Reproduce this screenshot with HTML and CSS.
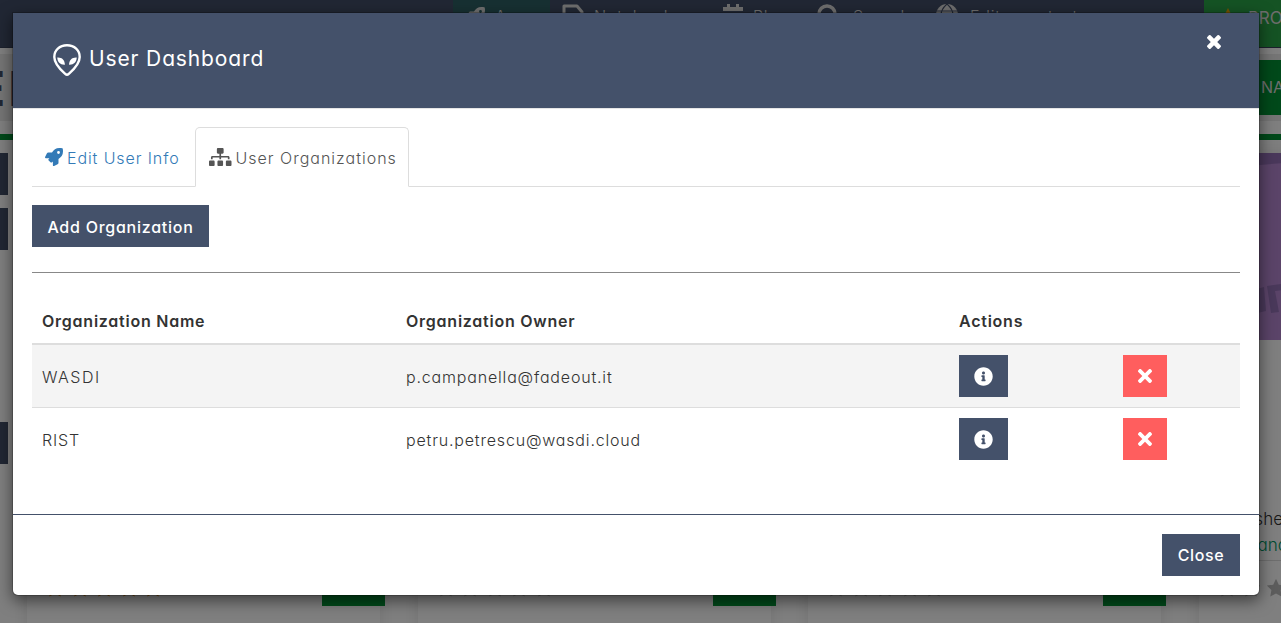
FILE: index.html
```html
<!DOCTYPE html>
<html lang="en">
<head>
<meta charset="utf-8">
<title>User Dashboard</title>
<link rel="stylesheet" href="styles.css">
</head>
<body>
<svg class="defs" aria-hidden="true">
  <symbol id="rocket" viewBox="0 0 512 512"><path d="M505.1 19.1c-1.2-5.5-6.700-11-12.200-12.200C460.700 0 435.500 0 410.400 0 307.200 0 245.300 55.200 199 128H94.800c-16.300 0-35.500 11.900-42.900 26.500L2.500 253.300A28.400 28.400 0 0 0 0 264a24 24 0 0 0 24 24h103.800l-22.500 22.500c-11.300 11.300-13 32.200 0 45.200l50.900 50.900c11.200 11.200 32.200 13.200 45.300 0l22.500-22.400V488a24 24 0 0 0 24 24 28.600 28.600 0 0 0 10.700-2.500l98.700-49.400c14.600-7.300 26.500-26.500 26.500-42.900V312.800C456.600 266.500 512 204.400 512 101.700c0-25.200 0-50.400-6.900-82.600zM384 168a40 40 0 1 1 40-40 40 40 0 0 1-40 40z"/></symbol>
  <symbol id="info" viewBox="0 0 512 512"><path d="M256 8C119.043 8 8 119.083 8 256c0 136.997 111.043 248 248 248s248-111.003 248-248C504 119.083 392.957 8 256 8zm0 110c23.196 0 42 18.804 42 42s-18.804 42-42 42-42-18.804-42-42 18.804-42 42-42zm56 254c0 6.627-5.373 12-12 12h-88c-6.627 0-12-5.373-12-12v-24c0-6.627 5.373-12 12-12h12v-64h-12c-6.627 0-12-5.373-12-12v-24c0-6.627 5.373-12 12-12h64c6.627 0 12 5.373 12 12v100h12c6.627 0 12 5.373 12 12v24z"/></symbol>
  <symbol id="times" viewBox="0 80 352 352"><path d="M242.72 256l100.07-100.07c12.28-12.28 12.28-32.19 0-44.48l-22.24-22.24c-12.28-12.28-32.19-12.28-44.48 0L176 189.280 75.930 89.210c-12.280-12.280-32.190-12.280-44.480 0L9.210 111.450c-12.280 12.280-12.280 32.190 0 44.480L109.280 256 9.210 356.070c-12.280 12.280-12.280 32.190 0 44.480l22.240 22.240c12.280 12.280 32.200 12.280 44.480 0L176 322.720l100.070 100.070c12.280 12.280 32.200 12.280 44.480 0l22.240-22.240c12.280-12.280 12.280-32.190 0-44.480L242.720 256z"/></symbol>
  <symbol id="star" viewBox="1 1 18 18"><path d="M10 .8l2.800 5.900 6.400.9-4.600 4.500 1.100 6.500L10 15.500l-5.700 3.100 1.100-6.500L.8 7.600l6.400-.9z"/></symbol>
</svg>

<div class="app">
  <nav class="navbar">
    <div class="nav-item active"><svg width="18" height="18"><use href="#rocket"/></svg><span>Apps</span></div>
    <div class="nav-item notebooks"><svg width="22" height="24" viewBox="0 0 22 24"><path d="M2 2h13l5 6v14H2z" fill="none" stroke="currentColor" stroke-width="3" stroke-linejoin="round"/></svg><span>Notebooks</span></div>
    <div class="nav-item plan"><svg width="20" height="24" viewBox="0 0 20 24"><path d="M4 0h3v3h6V0h3v3h4v4H0V3h4zM0 9h20v14H0z"/></svg><span>Plan</span></div>
    <div class="nav-item search"><svg width="22" height="22" viewBox="0 0 22 22"><path d="M10 2a8 8 0 1 1 0 16 8 8 0 0 1 0-16zm5 14l6 5" fill="none" stroke="currentColor" stroke-width="3.500"/></svg><span>Search</span></div>
    <div class="nav-item edit"><svg width="22" height="22" viewBox="0 0 22 22"><circle cx="11" cy="11" r="11"/><path d="M0 7h22M0 15h22M11 0C3 7 3 15 11 22 19 15 19 7 11 0" fill="none" stroke="#434f68" stroke-width="1.200"/></svg><span>Edit your text</span></div>
    <div class="pro"><svg width="12" height="14" viewBox="0 0 12 14"><path d="M6 0l2 4 4 9H0l4-9z"/></svg><span>PRO</span></div>
  </nav>
  <header class="titlebar"><div class="app-title">ED</div><div class="new-app">NAME</div></header>
  <div class="content">
    <aside class="filters"><i></i><i></i><i class="last"></i></aside>
    <section class="card"><div class="card-foot rated"><div class="stars"><svg><use href="#star"/></svg><svg><use href="#star"/></svg><svg><use href="#star"/></svg><svg><use href="#star"/></svg><svg><use href="#star"/></svg></div><div class="open"></div></div></section>
    <section class="card"><div class="card-foot"><div class="stars"><svg><use href="#star"/></svg><svg><use href="#star"/></svg><svg><use href="#star"/></svg><svg><use href="#star"/></svg><svg><use href="#star"/></svg></div><div class="open"></div></div></section>
    <section class="card"><div class="card-foot"><div class="stars"><svg><use href="#star"/></svg><svg><use href="#star"/></svg><svg><use href="#star"/></svg><svg><use href="#star"/></svg><svg><use href="#star"/></svg></div><div class="open"></div></div></section>
    <section class="card">
      <svg class="cover" viewBox="0 0 353 187"><path d="M0 0h353v187H0z" fill="#b688d2"/><path d="M0 0h353L84 10 0 17z" fill="#9470b6"/><path d="M54 137l11-3 2 24-13 3zM68 133l22-3v6l-14 2 4 21-8 1z" fill="#9572b7"/></svg>
      <div class="card-copy"><p>Publisher</p><p class="author">and</p></div>
      <div class="card-foot"><div class="stars"><svg><use href="#star"/></svg><svg><use href="#star"/></svg><svg><use href="#star"/></svg></div></div>
    </section>
  </div>
</div>

<div class="overlay">
  <div class="modal" role="dialog">
    <header class="modal-header">
      <svg class="alien" width="28" height="32" viewBox="0 0 28 32"><path d="M14 1.300C6.500 1.300 1.300 6.300 1.300 13c0 7.500 7.700 14 10.900 16.900 1.100 1 2.500 1 3.600 0C19 27 26.700 20.500 26.700 13 26.700 6.300 21.500 1.300 14 1.300z" fill="none" stroke="currentColor" stroke-width="2.400"/><path d="M4.300 13.500c4.700-.3 7.500 2.500 7.600 7.200-4.500.3-7.600-2.600-7.600-7.200zM23.700 13.500c-4.700-.3-7.500 2.500-7.600 7.200 4.500.3 7.600-2.600 7.600-7.200z"/></svg>
      <h1>User Dashboard</h1>
      <button class="dismiss" aria-label="Close"><svg width="14" height="14" viewBox="110 366 1188 1188"><path d="M1298 1322q0 40-28 68l-136 136q-28 28-68 28t-68-28l-294-294-294 294q-28 28-68 28t-68-28l-136-136q-28-28-28-68t28-68l294-294-294-294q-28-28-28-68t28-68l136-136q28-28 68-28t68 28l294 294 294-294q28-28 68-28t68 28l136 136q28 28 28 68t-28 68l-294 294 294 294q28 28 28 68z"/></svg></button>
    </header>
    <div class="modal-body">
      <div class="tabs">
        <a class="tab"><svg width="18" height="18"><use href="#rocket"/></svg><span class="t-info">Edit User Info</span></a>
        <a class="tab current"><svg width="22.500" height="18" viewBox="0 0 640 512"><path d="M128 352H32c-17.670 0-32 14.330-32 32v96c0 17.670 14.330 32 32 32h96c17.670 0 32-14.330 32-32v-96c0-17.670-14.330-32-32-32zm-24-80h192v48h48v-48h192v48h48v-57.590c0-21.170-17.230-38.410-38.410-38.410H344v-64h40c17.670 0 32-14.330 32-32V32c0-17.670-14.330-32-32-32H256c-17.670 0-32 14.330-32 32v96c0 17.670 14.330 32 32 32h40v64H94.410C73.230 224 56 241.230 56 262.410V320h48v-48zm264 80h-96c-17.670 0-32 14.330-32 32v96c0 17.670 14.330 32 32 32h96c17.670 0 32-14.330 32-32v-96c0-17.670-14.330-32-32-32zm240 0h-96c-17.670 0-32 14.330-32 32v96c0 17.670 14.330 32 32 32h96c17.670 0 32-14.330 32-32v-96c0-17.670-14.330-32-32-32z"/></svg><span class="t-org">User Organizations</span></a>
      </div>
      <button class="btn add"><span>Add Organization</span></button>
      <hr>
      <table>
        <colgroup><col class="c-name"><col class="c-owner"><col class="c-info"><col></colgroup>
        <thead><tr><th>Organization Name</th><th>Organization Owner</th><th>Actions</th><th></th></tr></thead>
        <tbody>
          <tr><td><span class="acronym">WASDI</span></td><td><span>p.campanella@fadeout.it</span></td><td><button class="btn icon"><svg width="19" height="19"><use href="#info"/></svg></button></td><td><button class="btn icon danger"><svg width="14" height="14"><use href="#times"/></svg></button></td></tr>
          <tr><td><span>RIST</span></td><td><span>petru.petrescu@wasdi.cloud</span></td><td><button class="btn icon"><svg width="19" height="19"><use href="#info"/></svg></button></td><td><button class="btn icon danger"><svg width="14" height="14"><use href="#times"/></svg></button></td></tr>
        </tbody>
      </table>
    </div>
    <footer class="modal-footer"><button class="btn close"><span>Close</span></button></footer>
  </div>
</div>
</body>
</html>
```
FILE: styles.css
```css
* { box-sizing: border-box; }
body {
  margin: 0;
  height: 623px;
  overflow: hidden;
  background: #fff;
  color: #333;
  font: 300 16px/24px Inter, "Open Sans", sans-serif;
  font-feature-settings: "cv11", "calt" 0;
}
svg { display: block; fill: currentColor; flex: none; }
.defs { position: absolute; width: 0; height: 0; }
h1, p { margin: 0; font-weight: inherit; }
button { font: inherit; font-feature-settings: inherit; border: 0; padding: 0; }

/* Application page */
.app { height: 623px; overflow: hidden; display: flex; flex-direction: column; }
.navbar { height: 48px; flex: none; display: flex; padding-left: 453px; background: #434f68; color: #ddd; border-bottom: 1px solid #38435a; }
.nav-item { display: flex; align-items: flex-start; white-space: nowrap; gap: 10px; padding-top: 4px; letter-spacing: .8px; }
.nav-item svg { margin-top: 0; }
.nav-item.active { width: 97px; padding-left: 14px; background: #2f6064; }
.nav-item.active svg { margin-top: 3px; }
.nav-item.notebooks { width: 173px; padding-left: 12px; }
.nav-item.plan { width: 94px; }
.nav-item.search { width: 119px; gap: 14px; }
.nav-item.edit { width: 268px; gap: 12px; }
.pro { flex: none; width: 77px; display: flex; gap: 11px; padding: 8px 0 0 18px; background: #2aa748; color: #ddd; font-weight: 400; }
.pro span { line-height: 20px; font-size: 17px; padding-left: 3px; }
.pro svg { color: #e6a400; }
.titlebar { flex: none; height: 92px; display: flex; justify-content: space-between; border-bottom: 6px solid #009235; background: linear-gradient(#fff 6px, #ebebeb 6px, #ebebeb 73px, #fff 73px); margin-bottom: 13px; overflow: hidden; }
.app-title { color: #434f68; font: 700 48px/82px Inter, sans-serif; letter-spacing: 3px; margin-left: -24px; }
.new-app { width: 81px; height: 55px; margin-top: 12px; padding-left: 61px; background: #009235; color: #ddd; line-height: 55px; font-weight: 400; }
.content { flex: none; width: 1580px; height: 490px; display: flex; gap: 37.500px; background: #fff; }
.filters { width: 8px; margin-right: -18.500px; display: flex; flex-direction: column; gap: 13px; }
.filters i { height: 42px; background: #434f68; }
.filters .last { margin-top: 159px; }
.card { width: 353px; flex: none; display: flex; flex-direction: column; background: #fff; box-shadow: 0 0 16px rgba(0, 0, 0, .1); }
.cover { width: 100%; height: 187px; }
.card-copy { padding: 166px 0 0 17px; font-size: 17px; }
.card-copy p { line-height: 26px; }
.card-copy .author { padding-left: 42px; color: #009966; }
.card-foot { margin-top: auto; height: 83px; padding: 18px 0 0 19px; display: flex; justify-content: space-between; border-top: 1px solid #ddd; color: #bbb; }
.card-foot.rated { color: #e6860a; }
.stars { display: flex; gap: 6.500px; }
.stars svg { width: 18px; height: 18px; }
.open { width: 63px; height: 41px; margin: -14px -5px 0 0; background: #009235; }

/* Modal */
.overlay { position: absolute; inset: 0; padding: 12px 21px 0 12px; background: rgba(0, 0, 0, .5); }
.modal { width: 1248px; height: 584px; display: flex; flex-direction: column; border: 1px solid rgba(0, 0, 0, .2); border-radius: 0 0 6px 6px; background: #fff; background-clip: padding-box; box-shadow: 0 5px 15px rgba(0, 0, 0, .5); }
.modal-header { flex: none; height: 96px; display: flex; align-items: center; padding: 0 38px 1px 40px; background: #44516a; border-bottom: 1px solid #e5e5e5; color: #fff; }
.alien { margin-right: 8px; }
h1 { font-size: 21px; line-height: 30px; font-weight: 400; letter-spacing: .87px; padding-bottom: 3px; }
.dismiss { margin: 0 0 36px auto; background: none; color: #fff; }
.modal-body { flex: 1; padding: 18px 19px 0; display: flex; flex-direction: column; }
.tabs { height: 60px; display: flex; border-bottom: 1px solid #ddd; }
.tab { display: flex; align-items: center; gap: 4px; height: 60px; padding: 0 13px; color: #337ab7; white-space: nowrap; }
.tab:first-child { width: 163px; }
.tab svg { margin-bottom: 1px; }
.tab span { padding-top: 2px; }
.t-info { letter-spacing: .9px; }
.t-org { letter-spacing: 1px; }
.tab.current { width: 214px; border: 1px solid #ddd; border-bottom-color: #fff; border-radius: 5px 5px 0 0; color: #555; }
.btn { display: flex; align-items: center; justify-content: center; height: 42px; background: #44516a; color: #fff; font-weight: 500; white-space: nowrap; }
.add { width: 177px; margin-top: 18px; letter-spacing: .75px; }
.add span { padding-top: 2px; }
hr { width: 100%; height: 1px; margin: 25px 0; border: 0; background: #888; }
table { width: 100%; border-collapse: separate; border-spacing: 0; table-layout: fixed; }
.c-name { width: 364px; }
.c-owner { width: 553px; }
.c-info { width: 164px; }
th { height: 47px; padding: 0 10px; text-align: left; font-weight: 600; letter-spacing: .76px; border-bottom: 2px solid #ddd; }
td { height: 62px; padding: 0 10px; }
td span { position: relative; top: 1px; letter-spacing: .82px; }
td .acronym { letter-spacing: 1.500px; }
tbody tr:first-child td { height: 63px; background: #f4f4f4; border-bottom: 1px solid #ddd; }
.icon { width: 49px; }
.danger { width: 44px; background: #ff5e5e; }
.modal-footer { flex: none; height: 81px; display: flex; justify-content: flex-end; padding: 19px 19px 0; border-top: 1px solid #44516a; }
.close { width: 78px; letter-spacing: .6px; }
```
